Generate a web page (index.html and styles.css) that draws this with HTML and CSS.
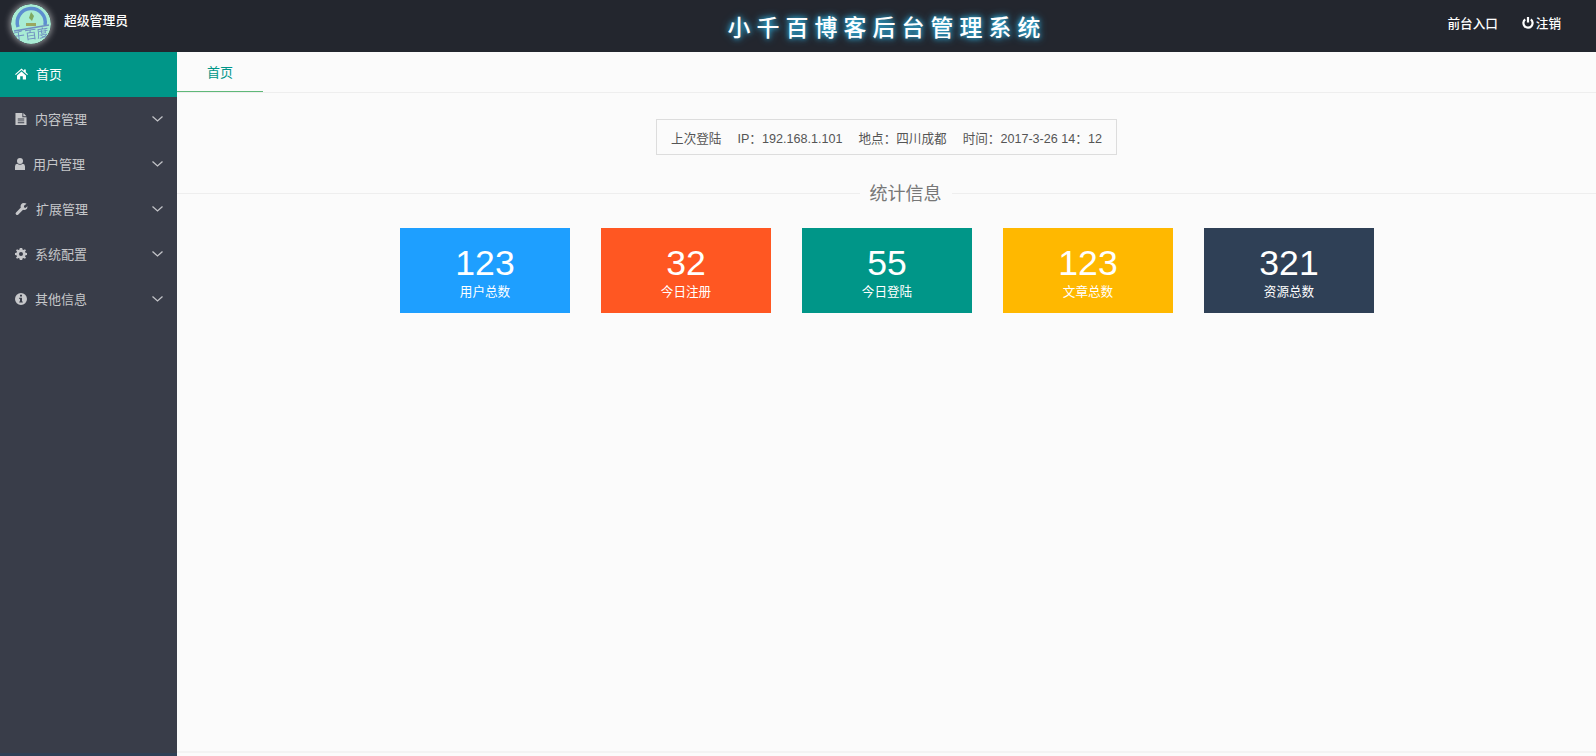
FILE: index.html
```html
<!DOCTYPE html>
<html lang="zh-CN">
<head>
  <meta charset="UTF-8">
  <meta name="viewport" content="width=device-width, initial-scale=1.0">
  <title>小千百博客后台管理系统</title>
  <link rel="stylesheet" href="styles.css">
</head>
<body>
  <!-- Header -->
  <header class="header">
    <div class="user">
      <svg class="avatar" viewBox="0 0 40 40">
        <circle cx="20" cy="20" r="20" fill="#a9ecd4"/>
        <path d="M7 23 A14 14 0 1 1 34 21" fill="none" stroke="#5d8fd0" stroke-width="3.5"/>
        <path d="M15 19 H25 V22 H15 Z" fill="#9aa860"/>
        <path d="M20 8 L23 12 L21 17 L18 14 Z" fill="#7fa860"/>
        <path d="M3 27 L38 21" stroke="#6f8fc0" stroke-width="1.5"/>
        <text class="avatar-text" x="20" y="35" transform="rotate(-8 20 32)">千百度</text>
      </svg>
      <span class="user-name">超级管理员</span>
    </div>
    <h1 class="title">小千百博客后台管理系统</h1>
    <nav class="top-links">
      <a>前台入口</a>
      <a class="logout">
        <svg class="power" viewBox="0 0 12 12"><path d="M3.2 2.4 A4.6 4.6 0 1 0 8.8 2.4" fill="none" stroke="#fff" stroke-width="2.2"/><path d="M6 0 V5.5" stroke="#fff" stroke-width="2.2"/></svg>注销
      </a>
    </nav>
  </header>

  <!-- Container -->
  <div class="container">
    <!-- Sidebar -->
    <aside class="sidebar">
      <a class="menu-item active">
        <svg class="icon icon-home" viewBox="0 0 13 11"><path d="M6.5 0 L9 2.2 V1 H10.8 V3.8 L13 5.8 L12.2 6.6 L6.5 1.6 L.8 6.6 L0 5.8 Z M2 7 L6.5 3 L11 7 V11 H7.8 V7.8 H5.2 V11 H2 Z"/></svg>
        首页
      </a>
      <a class="menu-item">
        <svg class="icon icon-file" viewBox="0 0 12 13"><path fill-rule="evenodd" d="M0 0 H7.5 V4.5 H12 V13 H0 Z M8.5 0 L12 3.5 H8.5 Z M2.5 6 V7 H9.5 V6 Z M2.5 8 V9 H9.5 V8 Z M2.5 10 V11 H9.5 V10 Z"/></svg>
        内容管理
        <svg class="chevron" viewBox="0 0 11 6"><path d="M.5 .5 L5.5 5 L10.5 .5"/></svg>
      </a>
      <a class="menu-item">
        <svg class="icon icon-user" viewBox="0 0 10 12"><circle cx="5" cy="3" r="3"/><path d="M0 12 V8.5 Q0 6 2.2 5.8 Q5 7.6 7.8 5.8 Q10 6 10 8.5 V12 Z"/></svg>
        用户管理
        <svg class="chevron" viewBox="0 0 11 6"><path d="M.5 .5 L5.5 5 L10.5 .5"/></svg>
      </a>
      <a class="menu-item">
        <svg class="icon icon-wrench" viewBox="0 0 13 13"><path d="M9 0 Q11 0 12 .8 L9.2 3 V4.6 L10.6 5.4 L13 3.6 Q13.2 6.6 10.8 7.4 Q9.4 7.8 8.2 7.2 L2.8 12.6 Q1.6 13.4 .6 12.4 Q-.4 11.2 .6 10.2 L5.8 5 Q5 3 6.2 1.4 Q7.2 0 9 0 Z"/></svg>
        扩展管理
        <svg class="chevron" viewBox="0 0 11 6"><path d="M.5 .5 L5.5 5 L10.5 .5"/></svg>
      </a>
      <a class="menu-item">
        <svg class="icon icon-cog" viewBox="0 0 12 12"><path fill-rule="evenodd" d="M4.8 0 H7.2 L7.5 1.6 L8.6 2.1 L10 1.2 L11 2.4 L10 3.6 L10.5 4.7 L12 5 V7 L10.5 7.3 L10 8.4 L11 9.6 L10 10.8 L8.6 9.9 L7.5 10.4 L7.2 12 H4.8 L4.5 10.4 L3.4 9.9 L2 10.8 L1 9.6 L2 8.4 L1.5 7.3 L0 7 V5 L1.5 4.7 L2 3.6 L1 2.4 L2 1.2 L3.4 2.1 L4.5 1.6 Z M6 4 A2 2 0 1 0 6 8 A2 2 0 1 0 6 4 Z"/></svg>
        系统配置
        <svg class="chevron" viewBox="0 0 11 6"><path d="M.5 .5 L5.5 5 L10.5 .5"/></svg>
      </a>
      <a class="menu-item">
        <svg class="icon icon-info" viewBox="0 0 12 12"><path fill-rule="evenodd" d="M6 0 A6 6 0 1 1 6 12 A6 6 0 1 1 6 0 Z M5 1.8 V3.6 H7 V1.8 Z M4.2 4.8 V5.9 H5 V8.4 H4.2 V9.6 H7.8 V8.4 H7 V4.8 Z"/></svg>
        其他信息
        <svg class="chevron" viewBox="0 0 11 6"><path d="M.5 .5 L5.5 5 L10.5 .5"/></svg>
      </a>
    </aside>

    <!-- Main Content -->
    <main class="main-content">
      <ul class="tabs">
        <li class="tab active">首页</li>
      </ul>

      <div class="login-info">
        <span>上次登陆</span>
        <span>IP：192.168.1.101</span>
        <span>地点：四川成都</span>
        <span>时间：2017-3-26 14：12</span>
      </div>

      <fieldset class="stats-title">
        <legend>统计信息</legend>
      </fieldset>

      <div class="stats">
        <div class="stat blue"><div class="stat-num">123</div><div class="stat-label">用户总数</div></div>
        <div class="stat orange"><div class="stat-num">32</div><div class="stat-label">今日注册</div></div>
        <div class="stat teal"><div class="stat-num">55</div><div class="stat-label">今日登陆</div></div>
        <div class="stat yellow"><div class="stat-num">123</div><div class="stat-label">文章总数</div></div>
        <div class="stat navy"><div class="stat-num">321</div><div class="stat-label">资源总数</div></div>
      </div>

      <footer class="footer"></footer>
    </main>
  </div>
</body>
</html>
```

FILE: styles.css
```css
/* General Reset */
* {
  margin: 0;
  padding: 0;
  box-sizing: border-box;
}

html, body {
  height: 100%;
  overflow: hidden;
}

body {
  font-family: "Liberation Sans", "Noto Sans CJK SC", sans-serif;
  font-size: 12.6px;
  background-color: #fbfbfb;
  color: #555;
  display: flex;
  flex-direction: column;
}

/* Header */
.header {
  height: 52px;
  flex: none;
  background-color: #23262e;
  color: #fff;
  display: grid;
  grid-template-columns: 354px 1fr 176px;
  align-items: center;
}

.user {
  display: flex;
  align-items: flex-start;
  padding: 4px 0 0 11px;
  height: 100%;
}

.avatar {
  width: 40px;
  height: 40px;
  border-radius: 50%;
  box-shadow: 0 0 6px 1px rgba(255, 255, 255, 0.55);
  filter: blur(0.4px);
}

.avatar-text {
  font-size: 12px;
  fill: #6f8fc0;
  text-anchor: middle;
}

.user-name {
  margin: 8px 0 0 13px;
  font-size: 12.8px;
  font-weight: 500;
  line-height: 18px;
}

.title {
  justify-self: center;
  font-size: 23px;
  font-weight: 500;
  letter-spacing: 6px;
  color: #fff;
  text-shadow: 0 0 5px #2fb4e0, 0 0 9px #2fa0d0;
}

.top-links {
  display: flex;
  justify-content: flex-end;
  gap: 24px;
  padding: 0 35px 8px 0;
  font-weight: 500;
}

.top-links a {
  display: flex;
  align-items: center;
  gap: 2px;
}

.power {
  width: 12px;
  height: 12px;
  margin-top: 2px;
}

/* Container */
.container {
  flex: 1;
  display: flex;
  min-height: 0;
}

/* Sidebar */
.sidebar {
  width: 177px;
  flex: none;
  background-color: #393d49;
  border-bottom: 3px solid #2f4056;
}

.menu-item {
  height: 45px;
  display: flex;
  align-items: center;
  gap: 8px;
  padding: 0 14px 3px 15px;
  font-size: 13px;
  color: #c6c7ca;
}

.menu-item.active {
  background-color: #009688;
  color: #fff;
}

.icon {
  flex: none;
  height: 12px;
  margin-top: 2px;
  fill: currentColor;
}

.icon-home { width: 13px; }
.icon-file { width: 12px; }
.icon-user { width: 10px; }
.icon-wrench { width: 13px; }
.icon-cog { width: 12px; }
.icon-info { width: 12px; }

.chevron {
  width: 11px;
  height: 6px;
  margin: 2px 0 0 auto;
  fill: none;
  stroke: #c2c3c7;
  stroke-width: 1.3;
}

/* Main Content */
.main-content {
  flex: 1;
  min-width: 0;
  display: flex;
  flex-direction: column;
}

.tabs {
  list-style: none;
  height: 41px;
  flex: none;
  border-bottom: 1px solid #eeeeee;
}

.tab {
  width: 86px;
  height: 40px;
  line-height: 41px;
  text-align: center;
  font-size: 13px;
}

.tab.active {
  color: #009688;
  border-bottom: 1px solid #5fb878;
}

.login-info {
  align-self: center;
  margin-top: 26px;
  height: 36px;
  display: flex;
  align-items: center;
  gap: 16px;
  padding: 0 14px;
  border: 1px solid #dddddd;
}

.stats-title {
  border: none;
  border-top: 1px solid #eeeeee;
  margin-top: 25px;
  padding-left: 38px;
  text-align: center;
}

.stats-title legend {
  margin: 0 auto;
  padding: 2px 10px 0;
  font-size: 18px;
  line-height: 24px;
  color: #777;
}

.stats {
  display: flex;
  justify-content: center;
  gap: 31px;
  margin-top: 22px;
}

.stat {
  width: 170px;
  height: 85px;
  color: #fff;
  text-align: center;
  padding: 16px 0 0 1px;
}

.stat-num {
  font-size: 35.6px;
  line-height: 38px;
}

.stat-label {
  font-size: 12.6px;
  line-height: 20px;
}

.blue { background-color: #1e9fff; }
.orange { background-color: #ff5722; }
.teal { background-color: #009688; }
.yellow { background-color: #ffb800; }
.navy { background-color: #2f4056; }

.footer {
  margin-top: auto;
  height: 5px;
  flex: none;
  border-top: 2px solid #f3f3f3;
}
```
